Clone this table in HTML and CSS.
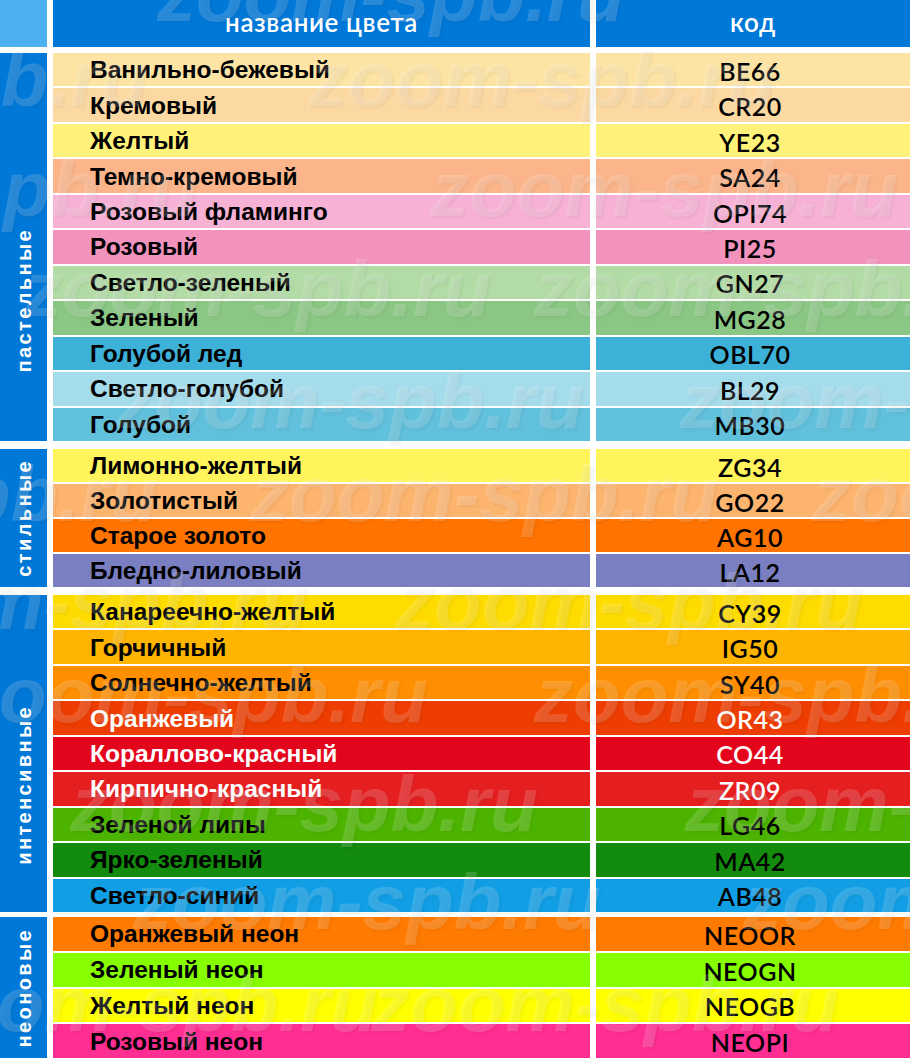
FILE: index.html
```html
<!DOCTYPE html>
<html lang="ru">
<head>
<meta charset="utf-8">
<title>Цвета</title>
<link rel="stylesheet" href="styles.css">
</head>
<body>
<div class="page">
  <div class="head">
    <div class="corner"></div>
    <div class="hcell">название цвета</div>
    <div class="hcell">код</div>
  </div>

  <div class="group g1">
    <div class="label"><span>пастельные</span></div>
    <div class="rows">
      <div class="row be66"><div class="nm">Ванильно-бежевый</div><div class="cd">BE66</div></div>
      <div class="row cr20"><div class="nm">Кремовый</div><div class="cd">CR20</div></div>
      <div class="row ye23"><div class="nm">Желтый</div><div class="cd">YE23</div></div>
      <div class="row sa24"><div class="nm">Темно-кремовый</div><div class="cd">SA24</div></div>
      <div class="row opi74"><div class="nm">Розовый фламинго</div><div class="cd">OPI74</div></div>
      <div class="row pi25"><div class="nm">Розовый</div><div class="cd">PI25</div></div>
      <div class="row gn27"><div class="nm">Светло-зеленый</div><div class="cd">GN27</div></div>
      <div class="row mg28"><div class="nm">Зеленый</div><div class="cd">MG28</div></div>
      <div class="row obl70"><div class="nm">Голубой лед</div><div class="cd">OBL70</div></div>
      <div class="row bl29"><div class="nm">Светло-голубой</div><div class="cd">BL29</div></div>
      <div class="row mb30"><div class="nm">Голубой</div><div class="cd">MB30</div></div>
    </div>
  </div>

  <div class="group g2">
    <div class="label"><span>стильные</span></div>
    <div class="rows">
      <div class="row zg34"><div class="nm">Лимонно-желтый</div><div class="cd">ZG34</div></div>
      <div class="row go22"><div class="nm">Золотистый</div><div class="cd">GO22</div></div>
      <div class="row ag10"><div class="nm">Старое золото</div><div class="cd">AG10</div></div>
      <div class="row la12"><div class="nm">Бледно-лиловый</div><div class="cd">LA12</div></div>
    </div>
  </div>

  <div class="group g3">
    <div class="label"><span>интенсивные</span></div>
    <div class="rows">
      <div class="row cy39"><div class="nm">Канареечно-желтый</div><div class="cd">CY39</div></div>
      <div class="row ig50"><div class="nm">Горчичный</div><div class="cd">IG50</div></div>
      <div class="row sy40"><div class="nm">Солнечно-желтый</div><div class="cd">SY40</div></div>
      <div class="row or43 light"><div class="nm">Оранжевый</div><div class="cd">OR43</div></div>
      <div class="row co44 light"><div class="nm">Кораллово-красный</div><div class="cd">CO44</div></div>
      <div class="row zr09 light"><div class="nm">Кирпично-красный</div><div class="cd">ZR09</div></div>
      <div class="row lg46"><div class="nm">Зеленой липы</div><div class="cd">LG46</div></div>
      <div class="row ma42"><div class="nm">Ярко-зеленый</div><div class="cd">MA42</div></div>
      <div class="row ab48"><div class="nm">Светло-синий</div><div class="cd">AB48</div></div>
    </div>
  </div>

  <div class="group g4">
    <div class="label"><span>неоновые</span></div>
    <div class="rows">
      <div class="row neoor"><div class="nm">Оранжевый неон</div><div class="cd">NEOOR</div></div>
      <div class="row neogn"><div class="nm">Зеленый неон</div><div class="cd">NEOGN</div></div>
      <div class="row neogb"><div class="nm">Желтый неон</div><div class="cd">NEOGB</div></div>
      <div class="row neopi"><div class="nm">Розовый неон</div><div class="cd">NEOPI</div></div>
    </div>
  </div>

  <div class="watermark" aria-hidden="true">
    <span class="wm w1">zoom-spb.ru</span>
    <span class="wm w2a">zoom-spb.ru</span>
    <span class="wm w2b">zoom-spb.ru</span>
    <span class="wm w3a">zoom-spb.ru</span>
    <span class="wm w3b">zoom-spb.ru</span>
    <span class="wm w4a">zoom-spb.ru</span>
    <span class="wm w4b">zoom-spb.ru</span>
    <span class="wm w5a">zoom-spb.ru</span>
    <span class="wm w5b">zoom-spb.ru</span>
    <span class="wm w6a">zoom-spb.ru</span>
    <span class="wm w6b">zoom-spb.ru</span>
    <span class="wm w6c">zoom-spb.ru</span>
    <span class="wm w7a">zoom-spb.ru</span>
    <span class="wm w7b">zoom-spb.ru</span>
    <span class="wm w8a">zoom-spb.ru</span>
    <span class="wm w8b">zoom-spb.ru</span>
    <span class="wm w9a">zoom-spb.ru</span>
    <span class="wm w9b">zoom-spb.ru</span>
    <span class="wm w10a">zoom-spb.ru</span>
    <span class="wm w10b">zoom-spb.ru</span>
    <span class="wm w11a">zoom-spb.ru</span>
    <span class="wm w11b">zoom-spb.ru</span>
  </div>
</div>
</body>
</html>
```

FILE: styles.css
```css
* { box-sizing: border-box; }
html, body { margin: 0; padding: 0; background: #fff; }
body { width: 910px; height: 1058px; overflow: hidden; }

.page {
  position: relative;
  width: 910px;
  height: 1058px;
  display: flex;
  flex-direction: column;
  font-family: "Liberation Sans", Arial, sans-serif;
}

.head {
  display: grid;
  grid-template-columns: 47px 537px 1fr;
  column-gap: 6px;
  height: 47px;
  margin-bottom: 6px;
}
.corner { background: #4cb1f0; }
.hcell {
  background: #0078d8;
  color: #fff;
  font-family: Lato, "Noto Sans", sans-serif;
  font-size: 26px;
  font-weight: 600;
  display: flex;
  align-items: center;
  justify-content: center;
  padding-bottom: 4px;
  letter-spacing: 0.6px;
}

.group {
  display: grid;
  grid-template-columns: 47px 1fr;
  column-gap: 6px;
}
.g1 { height: 388px; margin-bottom: 8px; }
.g2 { height: 138px; margin-bottom: 8px; }
.g3 { height: 317px; margin-bottom: 5px; }
.g4 { height: 141px; }

.label {
  background: #0078d7;
  color: #fff;
  display: flex;
  align-items: center;
  justify-content: center;
}
.label span {
  writing-mode: vertical-rl;
  transform: rotate(180deg);
  font-weight: 700;
  font-size: 20px;
  letter-spacing: 2.4px;
  line-height: 1;
}
.g1 .label { padding-top: 106px; }
.g3 .label { padding-top: 62px; }

.rows {
  display: flex;
  flex-direction: column;
  gap: 2px;
}
.row {
  flex: 1;
  display: grid;
  grid-template-columns: 537px 1fr;
  column-gap: 6px;
  color: #000;
}
.row > div { background: var(--c); display: flex; align-items: center; }
.row.light { color: #fff; }

.nm {
  padding-left: 37px;
  padding-top: 1px;
  font-weight: 700;
  font-size: 24.5px;
}
.cd {
  justify-content: center;
  padding-top: 2px;
  padding-right: 6px;
  font-family: Lato, "Noto Sans", sans-serif;
  font-weight: 600;
  font-size: 25px;
  letter-spacing: 0.5px;
}

.be66 { --c: #fde4a4; }
.cr20 { --c: #fcd9a2; }
.ye23 { --c: #fff27a; }
.sa24 { --c: #fcb58a; }
.opi74 { --c: #f6b1d5; }
.pi25 { --c: #f293bd; }
.gn27 { --c: #b2dba5; }
.mg28 { --c: #8bc784; }
.obl70 { --c: #3eb1d9; }
.bl29 { --c: #a5dcec; }
.mb30 { --c: #61c0dc; }
.zg34 { --c: #fff45c; }
.go22 { --c: #fdb46e; }
.ag10 { --c: #ff7300; }
.la12 { --c: #797fc0; }
.cy39 { --c: #ffdc00; }
.ig50 { --c: #ffb500; }
.sy40 { --c: #ff8e00; }
.or43 { --c: #ee3d00; }
.co44 { --c: #e3051b; }
.zr09 { --c: #e51f20; }
.lg46 { --c: #4cb400; }
.ma42 { --c: #138b0d; }
.ab48 { --c: #119ee5; }
.neoor { --c: #ff7a00; }
.neogn { --c: #86fd00; }
.neogb { --c: #ffff00; }
.neopi { --c: #ff2e93; }

/* watermark overlay */
.watermark {
  position: absolute;
  inset: 0;
  overflow: hidden;
  pointer-events: none;
}
.wm {
  position: absolute;
  font-family: "Liberation Sans", Arial, sans-serif;
  font-weight: 700;
  font-style: italic;
  font-size: 78px;
  line-height: 1;
  white-space: nowrap;
  color: rgba(255, 255, 255, 0.16);
  text-shadow: 2px 2px 3px rgba(0, 0, 0, 0.045);
}
.w1  { left: 157px; top: -45px; }
.w2a { left: -320px; top: 40px; }
.w2b { left: 308px; top: 40px; }
.w3a { left: -270px; top: 150px; }
.w3b { left: 430px; top: 150px; }
.w4a { left: 23px; top: 250px; }
.w4b { left: 534px; top: 250px; }
.w5a { left: 116px; top: 362px; }
.w5b { left: 680px; top: 362px; }
.w6a { left: -310px; top: 455px; }
.w6b { left: 250px; top: 455px; }
.w6c { left: 812px; top: 455px; }
.w7a { left: -160px; top: 563px; }
.w7b { left: 395px; top: 563px; }
.w8a { left: -40px; top: 656px; }
.w8b { left: 534px; top: 656px; }
.w9a { left: 70px; top: 765px; }
.w9b { left: 685px; top: 765px; }
.w10a { left: 133px; top: 863px; }
.w10b { left: 743px; top: 863px; }
.w11a { left: -90px; top: 965px; }
.w11b { left: 371px; top: 965px; }
```
